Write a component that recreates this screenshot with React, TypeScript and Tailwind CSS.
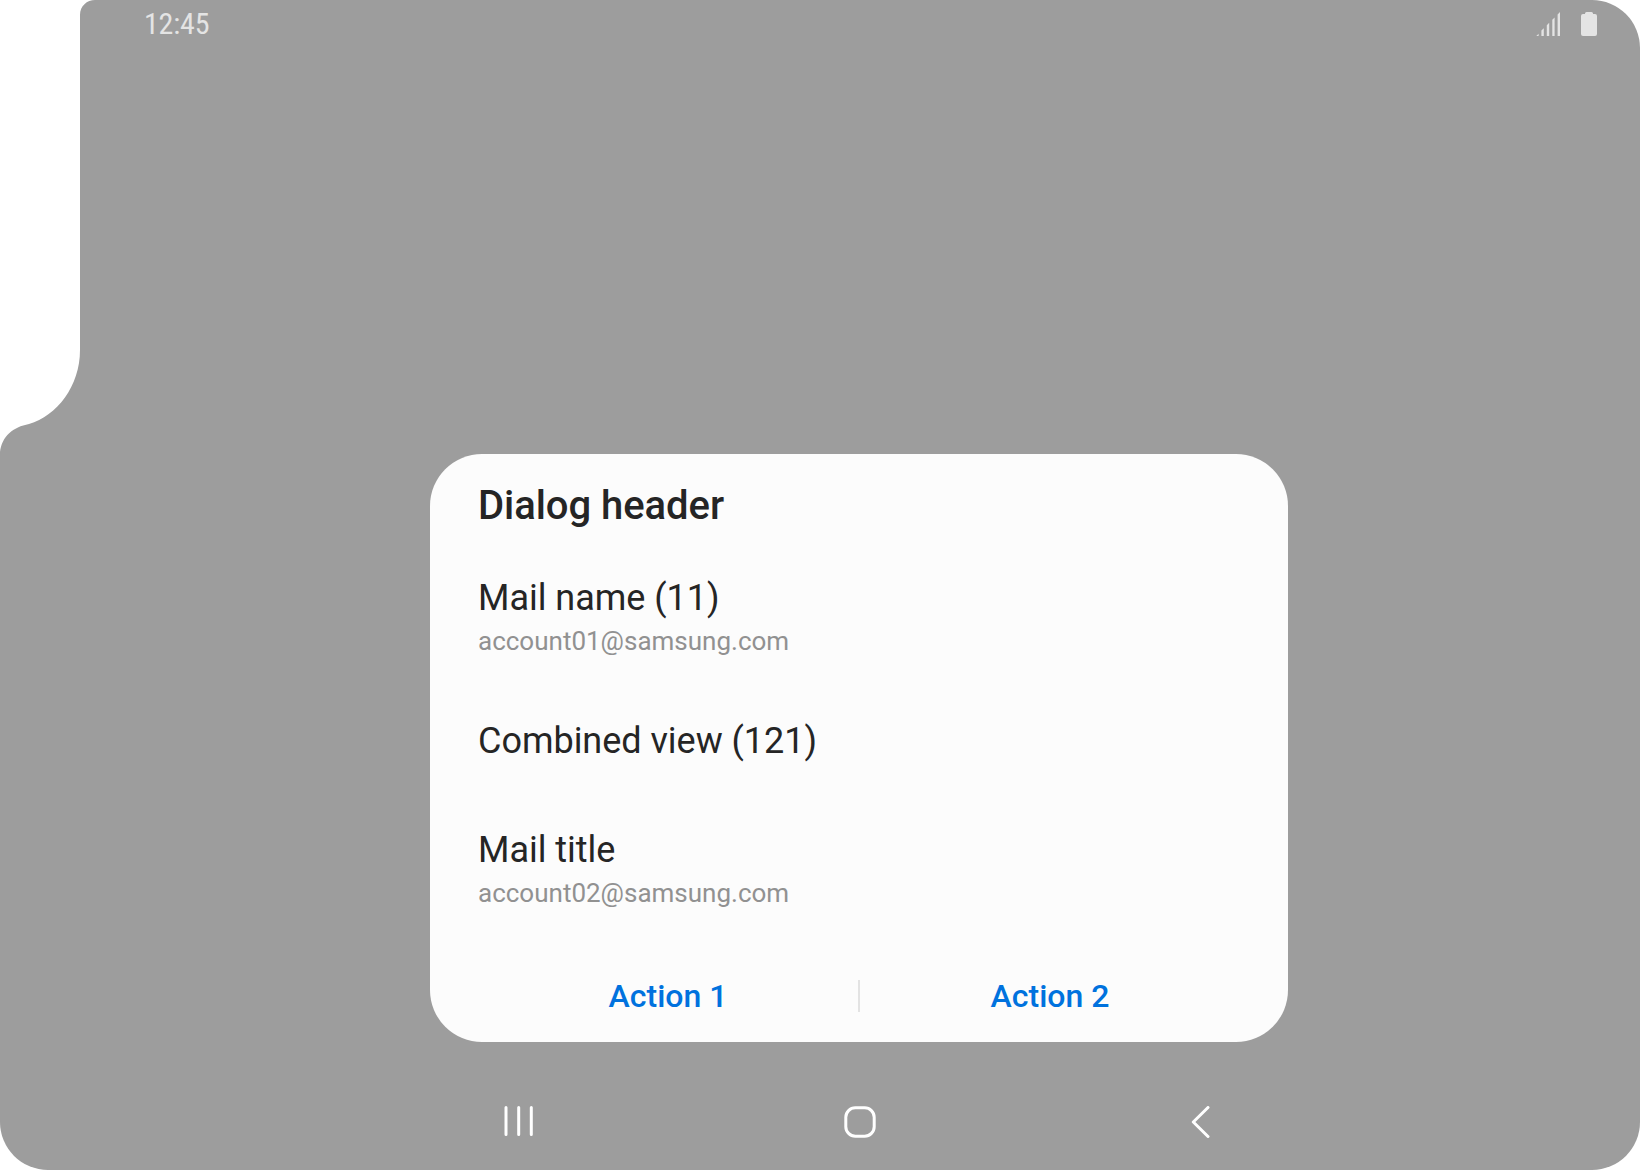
const accounts = [
  { title: 'Mail name (11)', sub: 'account01@samsung.com', box: 'h-[143px] pt-[13px]' },
  { title: 'Combined view (121)', sub: '', box: 'h-[109px] pt-[13px]' },
  { title: 'Mail title', sub: 'account02@samsung.com', box: 'h-[143px] pt-[13px]' },
];

function StatusBar() {
  return (
    <header className="flex h-12 justify-between pl-[144px] pr-[43px] text-[#e4e4e4]">
      <span className="text-[30px] leading-[48px] tracking-[-0.2px] [font-stretch:75%]">12:45</span>
      <div className="flex gap-[21px] pt-3">
        <svg width="24" height="24" viewBox="0 0 24 24" fill="currentColor">
          <path d="M0.3 24L2.6 21.7V24ZM5.4 24V18.6L7.8 16.2V24ZM10.8 24V13.2L13.2 10.8V24ZM16.3 24V7.7L18.6 5.4V24ZM21.6 24V2.4L24 0V24Z" />
        </svg>
        <svg width="16" height="24" viewBox="0 0 16 24" fill="currentColor">
          <path d="M5.5 0H10.5A1.5 1.5 0 0 1 12 1.5V2H14A2 2 0 0 1 16 4V22A2 2 0 0 1 14 24H2A2 2 0 0 1 0 22V4A2 2 0 0 1 2 2H4V1.5A1.5 1.5 0 0 1 5.5 0Z" />
        </svg>
      </div>
    </header>
  );
}

function Dialog() {
  return (
    <section className="mt-[406px] ml-[430px] flex h-[588px] w-[858px] flex-col rounded-[52px] bg-[#fcfcfc] text-[#252525]">
      <h1 className="h-[110px] pl-12 pt-[28px] text-[40px] font-medium leading-[47px] tracking-[-0.05px]">Dialog header</h1>
      {accounts.map((a) => (
        <div key={a.title} className={`pl-12 ${a.box}`}>
          <div className="text-[36px] leading-[42px] tracking-[-0.03px]">{a.title}</div>
          {a.sub && <div className="mt-[7px] text-[26px] leading-[30px] text-[#919191]">{a.sub}</div>}
        </div>
      ))}
      <div className="flex h-[74px] items-center px-[48px] text-[32px] font-medium text-[#0072de]">
        <button className="flex-1">Action 1</button>
        <span className="h-8 w-[2px] bg-[#e3e3e3]" />
        <button className="flex-1">Action 2</button>
      </div>
    </section>
  );
}

function NavBar() {
  return (
    <nav className="ml-[504px] mt-[64px] flex h-8 w-[707px] items-center justify-between">
      <svg width="30" height="32" viewBox="0 0 30 32" fill="none" stroke="#fff" strokeWidth="3" strokeLinecap="round">
        <path d="M2 1.5V28.5M14.7 1.5V28.5M27.3 1.5V28.5" />
      </svg>
      <svg className="mr-[5px]" width="32" height="32" viewBox="0 0 32 32" fill="none" stroke="#fff" strokeWidth="3">
        <rect x="1.8" y="1.8" width="28.4" height="28.4" rx="9.5" />
      </svg>
      <svg width="20" height="32" viewBox="0 0 20 32" fill="none" stroke="#fff" strokeWidth="3" strokeLinecap="round" strokeLinejoin="round">
        <path d="M17 1.5L2.3 16L17 30.5" />
      </svg>
    </nav>
  );
}

export default function App() {
  return (
    <div className="h-[1170px] w-[1640px] overflow-hidden bg-white font-['Roboto',sans-serif]">
      <main className="relative h-full w-full rounded-b-[48px] rounded-tr-[48px] bg-[#9d9d9d]">
        <svg className="absolute left-0 top-0" width="96" height="460" viewBox="0 0 96 460" fill="#fff">
          <path d="M0 0H95C87 0 80 6 80 15V350C80 386 57 416 29 423.9C13 427 2 436 0 452Z" />
        </svg>
        <StatusBar />
        <Dialog />
        <NavBar />
      </main>
    </div>
  );
}
